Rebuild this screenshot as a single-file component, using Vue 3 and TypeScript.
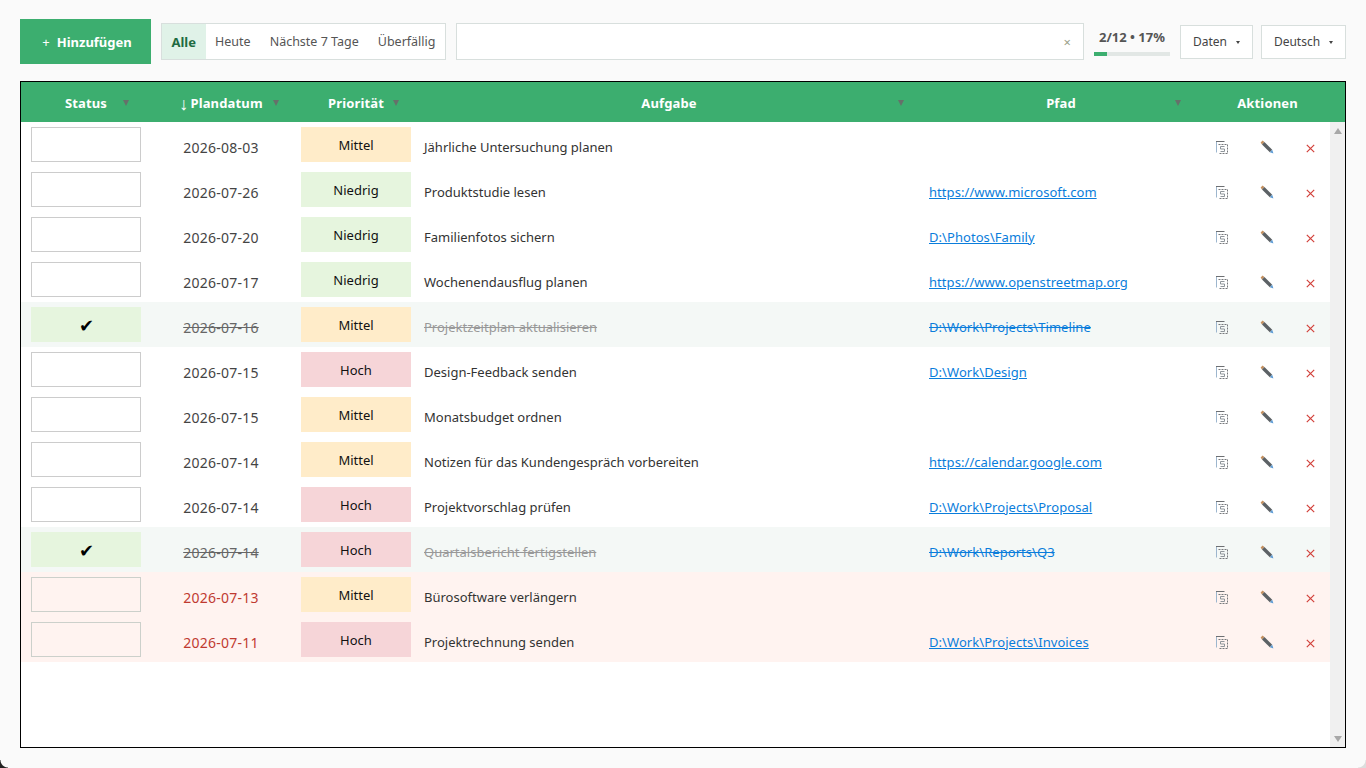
<template>
  <div class="app">
    <!-- TOOLBAR -->
    <header class="toolbar">
      <button class="btn-add"><span class="btn-add__plus">+</span>Hinzufügen</button>
      <div class="filters">
        <button
          v-for="f in filters"
          :key="f"
          class="filters__tab"
          :class="{ 'filters__tab--active': f === activeFilter }"
          @click="activeFilter = f"
        >{{ f }}</button>
      </div>
      <div class="search">
        <input v-model="query" />
        <span class="search__clear">×</span>
      </div>
      <div class="progress">
        <span class="progress__label">2/12 • 17%</span>
        <div class="progress__track">
          <div class="progress__bar" :style="{ width: '17%' }"></div>
        </div>
      </div>
      <button class="btn-menu btn-menu--data">Daten<i class="caret"></i></button>
      <button class="btn-menu btn-menu--lang">Deutsch<i class="caret"></i></button>
    </header>

    <!-- TABLE -->
    <section class="table">
      <div class="thead row-grid">
        <div v-for="h in headers" :key="h.label" class="th">
          <span v-if="h.sorted" class="th__dir">↓</span>{{ h.label }}
          <i v-if="h.arrow" class="th__sort" :style="{ right: h.arrow + 'px' }"></i>
        </div>
      </div>
      <div class="tbody">
        <div class="rows">
          <div
            v-for="t in tasks"
            :key="t.id"
            class="row row-grid"
            :class="{ 'row--done': t.done, 'row--late': t.late }"
          >
            <div class="cell cell--center">
              <div class="status" :class="{ 'status--done': t.done }">{{ t.done ? '✔' : '' }}</div>
            </div>
            <div class="cell cell--center cell--date">{{ t.date }}</div>
            <div class="cell cell--center">
              <div class="prio" :class="'prio--' + t.prio">{{ prioLabel[t.prio] }}</div>
            </div>
            <div class="cell cell--task">{{ t.title }}</div>
            <div class="cell cell--path"><a v-if="t.path" href="#">{{ t.path }}</a></div>
            <div class="cell cell--actions">
              <button class="act" aria-label="Kopieren">
                <svg width="12" height="13" viewBox="0 0 12 13">
                  <path d="M0.5 11.5V1" fill="none" stroke="#9db6ce" stroke-width="1" />
                  <path d="M0 0.5H8.5" fill="none" stroke="#6d6f72" stroke-width="1" />
                  <path d="M2.5 3.5h9v9h-9" fill="none" stroke="#77797c" stroke-width="1" stroke-dasharray="2 1" />
                  <path d="M4.5 5.5h4M4.5 5.5v2.5h4v2.5h-4" fill="none" stroke="#8f959a" stroke-width="1" />
                </svg>
              </button>
              <button class="act" aria-label="Bearbeiten">
                <svg width="14" height="14" viewBox="0 0 14 14">
                  <path d="M0.6 2.6 2.6 0.6 4.4 2 2 4.4z" fill="#c4905e" />
                  <path d="M2 4.4 4.4 2 12.2 9.8 9.8 12.2z" fill="#5c6165" />
                  <path d="M9.8 12.2 12.2 9.8 13.4 13.4z" fill="#5b9bd5" />
                </svg>
              </button>
              <button class="act act--del" aria-label="Löschen">
                <svg width="9" height="9" viewBox="0 0 9 9">
                  <path d="M0.8 0.8 8.2 8.2M8.2 0.8 0.8 8.2" fill="none" stroke="#d2403a" stroke-width="1.2" />
                </svg>
              </button>
            </div>
          </div>
        </div>
        <div class="scrollbar">
          <i class="scrollbar__up"></i>
          <i class="scrollbar__down"></i>
        </div>
      </div>
    </section>

    <i class="corner corner--left"></i>
    <i class="corner corner--right"></i>
  </div>
</template>

<script setup lang="ts">
import { ref } from 'vue'

type Prio = 'mittel' | 'niedrig' | 'hoch'

interface Task {
  id: number
  date: string
  prio: Prio
  title: string
  path?: string
  done?: boolean
  late?: boolean
}

const filters = ['Alle', 'Heute', 'Nächste 7 Tage', 'Überfällig']
const activeFilter = ref('Alle')
const query = ref('')

const headers = [
  { label: 'Status', arrow: 22 },
  { label: 'Plandatum', arrow: 12, sorted: true },
  { label: 'Priorität', arrow: 22 },
  { label: 'Aufgabe', arrow: 13 },
  { label: 'Pfad', arrow: 24 },
  { label: 'Aktionen', arrow: 0 }
]

const prioLabel: Record<Prio, string> = { mittel: 'Mittel', niedrig: 'Niedrig', hoch: 'Hoch' }

const tasks: Task[] = [
  { id: 1, date: '2026-08-03', prio: 'mittel', title: 'Jährliche Untersuchung planen' },
  { id: 2, date: '2026-07-26', prio: 'niedrig', title: 'Produktstudie lesen', path: 'https://www.microsoft.com' },
  { id: 3, date: '2026-07-20', prio: 'niedrig', title: 'Familienfotos sichern', path: 'D:\\Photos\\Family' },
  { id: 4, date: '2026-07-17', prio: 'niedrig', title: 'Wochenendausflug planen', path: 'https://www.openstreetmap.org' },
  { id: 5, date: '2026-07-16', prio: 'mittel', title: 'Projektzeitplan aktualisieren', path: 'D:\\Work\\Projects\\Timeline', done: true },
  { id: 6, date: '2026-07-15', prio: 'hoch', title: 'Design-Feedback senden', path: 'D:\\Work\\Design' },
  { id: 7, date: '2026-07-15', prio: 'mittel', title: 'Monatsbudget ordnen' },
  { id: 8, date: '2026-07-14', prio: 'mittel', title: 'Notizen für das Kundengespräch vorbereiten', path: 'https://calendar.google.com' },
  { id: 9, date: '2026-07-14', prio: 'hoch', title: 'Projektvorschlag prüfen', path: 'D:\\Work\\Projects\\Proposal' },
  { id: 10, date: '2026-07-14', prio: 'hoch', title: 'Quartalsbericht fertigstellen', path: 'D:\\Work\\Reports\\Q3', done: true },
  { id: 11, date: '2026-07-13', prio: 'mittel', title: 'Bürosoftware verlängern', late: true },
  { id: 12, date: '2026-07-11', prio: 'hoch', title: 'Projektrechnung senden', path: 'D:\\Work\\Projects\\Invoices', late: true }
]
</script>

<style>
html, body { margin: 0; background: #fafafa; }
</style>

<style scoped>
.app {
  position: relative;
  box-sizing: border-box;
  height: 100vh;
  padding: 19px 20px 20px;
  display: flex;
  flex-direction: column;
  gap: 17px;
  background: #fafafa;
  color: #333;
  font-family: "Noto Sans", sans-serif;
  font-size: 13px;
  overflow: hidden;
}
button { font-family: inherit; cursor: pointer; }

/* TOOLBAR */
.toolbar { display: flex; align-items: center; height: 45px; flex-shrink: 0; }
.btn-add {
  width: 131px;
  height: 45px;
  border: none;
  background: #3cae6f;
  color: #fff;
  font-size: 13px;
  font-weight: 700;
  margin-right: 10px;
  padding: 0 0 0 3px;
}
.btn-add__plus { font-weight: 400; margin-right: 7px; }
.filters {
  box-sizing: border-box;
  width: 285px;
  height: 37px;
  display: flex;
  background: #fff;
  border: 1px solid #d8dfdd;
  margin-right: 10px;
}
.filters__tab {
  border: none;
  background: none;
  color: #555;
  font-size: 12.5px;
  padding: 0 9.5px;
  white-space: nowrap;
}
.filters__tab--active { background: #e0f2e8; color: #1f6b42; font-weight: 700; font-size: 13px; }
.search {
  box-sizing: border-box;
  width: 628px;
  height: 37px;
  display: flex;
  align-items: center;
  background: #fff;
  border: 1px solid #d8dfdd;
  margin-right: 10px;
}
.search input {
  flex: 1;
  min-width: 0;
  border: none;
  outline: none;
  background: none;
}
.search__clear { color: #9a9f8a; font-size: 13px; margin-right: 12px; }
.progress {
  width: 76px;
  display: flex;
  flex-direction: column;
  align-items: center;
  gap: 7px;
  margin-right: 10px;
  padding-top: 1px;
}
.progress__label { font-size: 13px; font-weight: 700; color: #555; line-height: 16px; white-space: nowrap; }
.progress__track { width: 100%; height: 4px; background: #e2e7e5; }
.progress__bar { height: 100%; background: #3cae6f; }
.btn-menu {
  box-sizing: border-box;
  height: 34px;
  background: #fff;
  border: 1px solid #d8dfdd;
  color: #444;
  font-size: 12px;
  padding: 0;
  white-space: nowrap;
}
.btn-menu--data { width: 73px; margin-right: 8px; }
.btn-menu--lang { width: 85px; }
.caret {
  display: inline-block;
  vertical-align: middle;
  margin-left: 9px;
  border-left: 2.5px solid transparent;
  border-right: 2.5px solid transparent;
  border-top: 3px solid #444;
}

/* TABLE */
.table {
  flex: 1;
  min-height: 0;
  display: flex;
  flex-direction: column;
  background: #fff;
  border: 1px solid #000;
}
.row-grid {
  display: grid;
  grid-template-columns: 130px 140px 130px 496px 288px 125px;
}
.thead { height: 40px; flex-shrink: 0; background: #3cae6f; padding-right: 15px; }
.th {
  position: relative;
  display: flex;
  align-items: center;
  justify-content: center;
  padding-top: 2px;
  box-sizing: border-box;
  color: #fff;
  font-size: 13px;
  font-weight: 700;
  letter-spacing: 0.15px;
  white-space: nowrap;
}
.th__dir { font-size: 18px; font-weight: 400; line-height: 1; margin-right: 2px; }
.th__sort {
  position: absolute;
  top: 18px;
  border-left: 3.5px solid transparent;
  border-right: 3.5px solid transparent;
  border-top: 6px solid #66706a;
}
.tbody { flex: 1; min-height: 0; display: flex; }
.rows { flex: 1; min-width: 0; }
.row { height: 45px; font-size: 13px; }
.row--done { background: #f4f8f6; }
.row--late { background: #fff3f0; }
.cell { display: flex; align-items: center; min-width: 0; white-space: nowrap; }
.cell--center { justify-content: center; }
.cell--date, .cell--task, .cell--path { padding-top: 5px; box-sizing: border-box; }
.cell--date { color: #444; font-size: 14px; letter-spacing: 0.25px; }
.row--done .cell--date { color: #666; text-decoration: line-through; }
.row--late .cell--date { color: #bf3a30; }
.cell--task { padding-left: 3px; color: #333; }
.row--done .cell--task { color: #999; text-decoration: line-through; }
.cell--path { padding-left: 12px; letter-spacing: 0.06px; }
.cell--path a { color: #0a7ddb; text-decoration: underline; }
.row--done .cell--path a { text-decoration: line-through; }
.cell--actions { justify-content: center; padding: 5px 2px 0 0; box-sizing: border-box; }
.status {
  box-sizing: border-box;
  width: 110px;
  height: 35px;
  display: flex;
  align-items: center;
  justify-content: center;
  border: 1px solid #ccc;
  background: #fff;
  color: #000;
  font-size: 18px;
  line-height: 1;
}
.row--late .status { background: #fff3f0; border-color: #ccd0cb; }
.status--done { background: #e6f5de; border-color: #e6f5de; }
.prio {
  width: 110px;
  height: 35px;
  display: flex;
  align-items: center;
  justify-content: center;
  color: #111;
  font-size: 13px;
  box-sizing: border-box;
}
.prio--mittel { background: #ffecc9; }
.prio--niedrig { background: #e6f5de; }
.prio--hoch { background: #f6d5d8; }
.act {
  flex: none;
  width: 44.25px;
  height: 20px;
  display: flex;
  align-items: center;
  justify-content: center;
  border: none;
  background: none;
  padding: 0;
}
.act--del svg { margin-top: 2px; }

/* SCROLLBAR */
.scrollbar {
  width: 15px;
  flex-shrink: 0;
  background: #f0f0f0;
  display: flex;
  flex-direction: column;
  justify-content: space-between;
  align-items: center;
  padding: 6px 0 5px;
  box-sizing: border-box;
}
.scrollbar__up, .scrollbar__down {
  border-left: 4px solid transparent;
  border-right: 4px solid transparent;
}
.scrollbar__up { border-bottom: 6px solid #a8a8a8; }
.scrollbar__down { border-top: 6px solid #a8a8a8; }

/* WINDOW CORNERS */
.corner { position: absolute; bottom: 0; width: 8px; height: 8px; }
.corner--left { left: 0; background: radial-gradient(circle at 100% 0, transparent 7px, #222 8px); }
.corner--right { right: 0; background: radial-gradient(circle at 0 0, transparent 7px, #ddd 8px); }
</style>
